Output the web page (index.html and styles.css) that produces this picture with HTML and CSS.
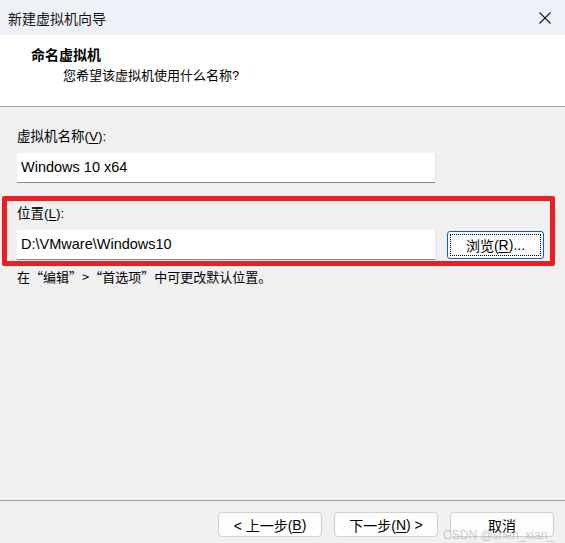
FILE: index.html
```html
<!DOCTYPE html>
<html lang="zh-CN">
<head>
<meta charset="utf-8">
<link rel="stylesheet" href="styles.css">
</head>
<body>
<div class="window">
  <div class="titlebar">
    <span class="title">新建虚拟机向导</span>
    <svg class="close" width="12" height="12" viewBox="0 0 12 12"><path d="M0.5 0.5L11.5 11.5M11.5 0.5L0.5 11.5" stroke="#1a1a1a" stroke-width="1.1" fill="none"/></svg>
  </div>
  <div class="header">
    <div class="h-title">命名虚拟机</div>
    <div class="h-sub">您希望该虚拟机使用什么名称?</div>
  </div>
  <div class="body">
    <div class="label">虚拟机名称(<u>V</u>):</div>
    <div class="input">Windows 10 x64</div>
    <div class="loc-box">
      <div class="label">位置(<u>L</u>):</div>
      <div class="loc-row">
        <div class="input">D:\VMware\Windows10</div>
        <div class="browse"><span class="focus">浏览(<u>R</u>)...</span></div>
      </div>
    </div>
    <div class="hint">在“编辑”&gt;“首选项”中可更改默认位置。</div>
  </div>
  <div class="footer">
    <div class="btn">&lt; 上一步(<u>B</u>)</div>
    <div class="btn">下一步(<u>N</u>) &gt;</div>
    <div class="btn">取消</div>
    <span class="watermark">CSDN @shen_xian_</span>
  </div>
</div>
</body>
</html>
```
FILE: styles.css
```css
html, body {
  margin: 0;
  padding: 0;
}
body {
  width: 565px;
  height: 543px;
  background: #f0f0f0;
  font-family: "Liberation Sans", "Noto Sans CJK SC", sans-serif;
  font-size: 14px;
  color: #000;
  overflow: hidden;
}
.window {
  display: flex;
  flex-direction: column;
  height: 543px;
}
.titlebar {
  height: 35px;
  background: #eff1f8;
  display: flex;
  align-items: center;
  justify-content: space-between;
  padding: 0 14px 0 8px;
  flex: none;
}
.title {
  font-size: 14px;
  color: #111;
}
.close {
  display: block;
}
.header {
  height: 72px;
  background: #fff;
  border-bottom: 1px solid #a0a0a0;
  box-sizing: border-box;
  padding: 10px 0 0 31px;
  flex: none;
}
.h-title {
  font-weight: bold;
  font-size: 14px;
  line-height: 20px;
}
.h-sub {
  font-size: 13px;
  line-height: 20px;
  padding-left: 32px;
  margin-top: 1px;
}
.body {
  flex: 1;
  padding: 20px 10px 0 2px;
  display: flex;
  flex-direction: column;
}
.label {
  padding-left: 15px;
  line-height: 20px;
  height: 20px;
  font-size: 13.5px;
}
u {
  text-decoration: underline;
  text-underline-offset: 2px;
}
.body > .input {
  margin-left: 15px;
  margin-top: 6px;
}
.input {
  width: 418px;
  height: 30px;
  box-sizing: border-box;
  background: #fff;
  border-bottom: 1px solid #868686;
  box-shadow: 1px 0 0 #e3e3e3;
  padding: 4px 0 0 4px;
  font-size: 14.5px;
  line-height: 20px;
}
.loc-box {
  margin-top: 13px;
  border: 5px solid #ee1d23;
  border-radius: 2px;
  height: 70px;
  box-sizing: border-box;
  padding: 3px 0 0 10px;
  width: 553px;
}
.loc-box .label {
  padding-left: 0;
}
.loc-row {
  display: flex;
  align-items: flex-start;
  gap: 12px;
  margin-top: 6px;
}
.browse {
  width: 97px;
  height: 28px;
  margin-top: 1px;
  box-sizing: border-box;
  border: 1px solid #0067c0;
  border-radius: 3px;
  background: #fdfdfd;
  padding: 2px;
  display: flex;
}
.focus {
  flex: 1;
  border: 1px dotted #000;
  display: flex;
  align-items: center;
  justify-content: center;
  font-size: 14px;
}
.hint {
  padding-left: 15px;
  margin-top: 1px;
  line-height: 20px;
  font-size: 13px;
  font-family: "Noto Sans CJK SC", sans-serif;
}
.footer {
  height: 43px;
  flex: none;
  border-top: 1px solid #a0a0a0;
  box-sizing: border-box;
  display: flex;
  justify-content: flex-end;
  gap: 12px;
  padding: 11px 11px 0 0;
  position: relative;
}
.btn {
  width: 104px;
  height: 25px;
  box-sizing: border-box;
  border: 1px solid #d0d0d0;
  border-radius: 4px;
  background: #fdfdfd;
  display: flex;
  align-items: center;
  justify-content: center;
  font-size: 14px;
}
.watermark {
  position: absolute;
  right: 11px;
  bottom: 1px;
  font-size: 12px;
  color: rgba(160,160,160,0.55);
  font-family: "Liberation Sans", sans-serif;
}
```
